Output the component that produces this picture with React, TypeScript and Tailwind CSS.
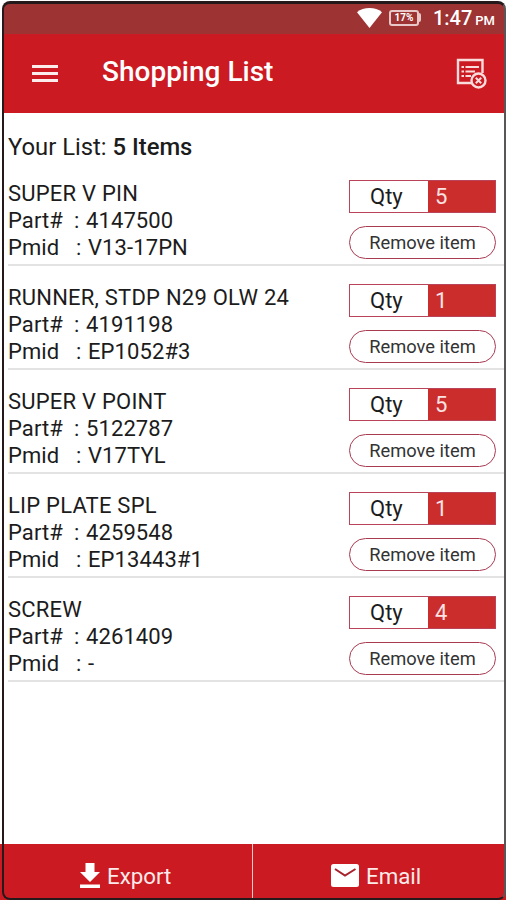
const items = [
  { name: 'SUPER V PIN', part: '4147500', pmid: 'V13-17PN', qty: 5 },
  { name: 'RUNNER, STDP N29 OLW 24', part: '4191198', pmid: 'EP1052#3', qty: 1 },
  { name: 'SUPER V POINT', part: '5122787', pmid: 'V17TYL', qty: 5 },
  { name: 'LIP PLATE SPL', part: '4259548', pmid: 'EP13443#1', qty: 1 },
  { name: 'SCREW', part: '4261409', pmid: '-', qty: 4 },
]

function StatusBar() {
  return (
    <div className="h-[30px] shrink-0 bg-[#9d3333] flex items-center justify-end pr-[9px] pb-[3px] text-white">
      <svg className="w-[25px] h-[20px]" viewBox="0 0 25 20" fill="currentColor">
        <path d="M12.5 20 0 4.2C3.4 1.4 7.7 0 12.5 0S21.6 1.4 25 4.2z" />
      </svg>
      <div className="ml-[7px] w-[30px] h-[16px] rounded-[3px] border-2 border-[#e8c8c8] flex items-center justify-center text-[10px] leading-none font-bold">
        17%
      </div>
      <div className="w-[2px] h-[9px] bg-[#e8c8c8] rounded-r-sm" />
      <div className="ml-[12px] flex items-baseline leading-none pt-[1px]">
        <span className="text-[20px] font-medium">1:47</span>
        <span className="ml-[3px] text-[13px] font-medium">PM</span>
      </div>
    </div>
  )
}

function Header() {
  return (
    <header className="h-[79px] shrink-0 bg-[#cb1a22] flex items-center pl-[28px] pr-[14px] text-white">
      <div className="flex flex-col gap-[4px]">
        <span className="block w-[26px] h-[3px] bg-[#fdecec]" />
        <span className="block w-[26px] h-[3px] bg-[#fdecec]" />
        <span className="block w-[26px] h-[3px] bg-[#fdecec]" />
      </div>
      <h1 className="ml-[44px] pb-[4px] text-[28px] leading-none font-medium whitespace-nowrap">Shopping List</h1>
      {/* Clear list */}
      <svg className="ml-auto mr-[3px] mb-[1px] w-[32px] h-[32px]" viewBox="0 0 32 32" fill="none" stroke="#fbdcdc" strokeWidth="2.4">
        <path d="M17 26H3V3H27.500V16" />
        <path d="M6.500 10H9M10.500 10H24M6.500 14.500H9M10.500 14.500H20M6.500 19H9M10.500 19H16" strokeWidth="1.8" />
        <circle cx="23.5" cy="23.5" r="7" />
        <path d="M20.800 20.800 26.200 26.200M26.200 20.800 20.800 26.200" strokeWidth="2" />
      </svg>
    </header>
  )
}

function ListItem({ item }: { item: (typeof items)[number] }) {
  return (
    <li className="h-[104px] border-b-2 border-[#e3e3e3] flex justify-between pt-[18px] pr-[8px]">
      <div className="text-[22px] leading-[27px] tracking-[0.1px] whitespace-nowrap">
        <p className="tracking-[0.22px]">{item.name}</p>
        <p className="flex">
          <span className="w-[66px]">Part#</span>
          <span className="w-[12px]">:</span>
          <span>{item.part}</span>
        </p>
        <p className="flex">
          <span className="w-[68px]">Pmid</span>
          <span className="w-[12px]">:</span>
          <span>{item.pmid}</span>
        </p>
      </div>
      <div className="w-[147px]">
        <div className="h-[33px] flex border border-[#b8455a] text-[22px] leading-[32px]">
          <span className="w-[78px] pl-[20px]">Qty</span>
          <span className="flex-1 pl-[7px] bg-[#cb2d2d] text-[#fbe3e3]">{item.qty}</span>
        </div>
        <button className="mt-[13px] block w-full h-[33px] rounded-full border border-[#a83a52] text-[18.3px] leading-[31px] text-[#333]">
          Remove item
        </button>
      </div>
    </li>
  )
}

export default function App() {
  return (
    <div className="w-[506px] h-[900px] overflow-hidden bg-[#cb1a22] font-['Roboto',sans-serif] text-[#1c1c1c] relative">
      <div className="h-full flex flex-col bg-white pt-[4px] pl-[4px] pr-[2px]">
        <StatusBar />
        <Header />
        <main className="flex-1 pl-[4px]">
          <p className="pt-[18px] h-[49px] text-[23.8px] leading-[32px]">
            Your List: <span className="font-medium">5 Items</span>
          </p>
          <ul>
            {items.map((item) => (
              <ListItem key={item.name} item={item} />
            ))}
          </ul>
        </main>
        <footer className="h-[56px] shrink-0 -ml-[4px] -mr-[2px] bg-[#cb1a22] flex text-[22.3px] leading-none text-[#fdeaea]">
          <div className="w-[252px] flex items-center pt-[7px] pl-[80px]">
            <svg className="w-[20px] h-[25px]" viewBox="0 0 20 25" fill="white">
              <path d="M5.500 0h9v9H20L10 19 0 9h5.500zM0 21.500h20V25H0z" />
            </svg>
            <span className="ml-[7px] pt-[1px]">Export</span>
          </div>
          <div className="flex-1 border-l border-[#f6c9c9] flex items-center pt-[7px] pl-[78px]">
            <svg className="w-[28px] h-[23px]" viewBox="0 0 28 23">
              <rect width="28" height="23" rx="2.5" fill="white" />
              <path d="M4 5 14 11.500 24.500 5" fill="none" stroke="#a8212b" strokeWidth="2" />
            </svg>
            <span className="ml-[7px] pt-[1px]">Email</span>
          </div>
        </footer>
      </div>
      {/* Device outline */}
      <div className="absolute top-[1px] bottom-0 left-[2px] right-0 rounded-[8px] border-2 border-t-[3px] border-[#26191b] border-r-[#5c5557]" />
    </div>
  )
}
